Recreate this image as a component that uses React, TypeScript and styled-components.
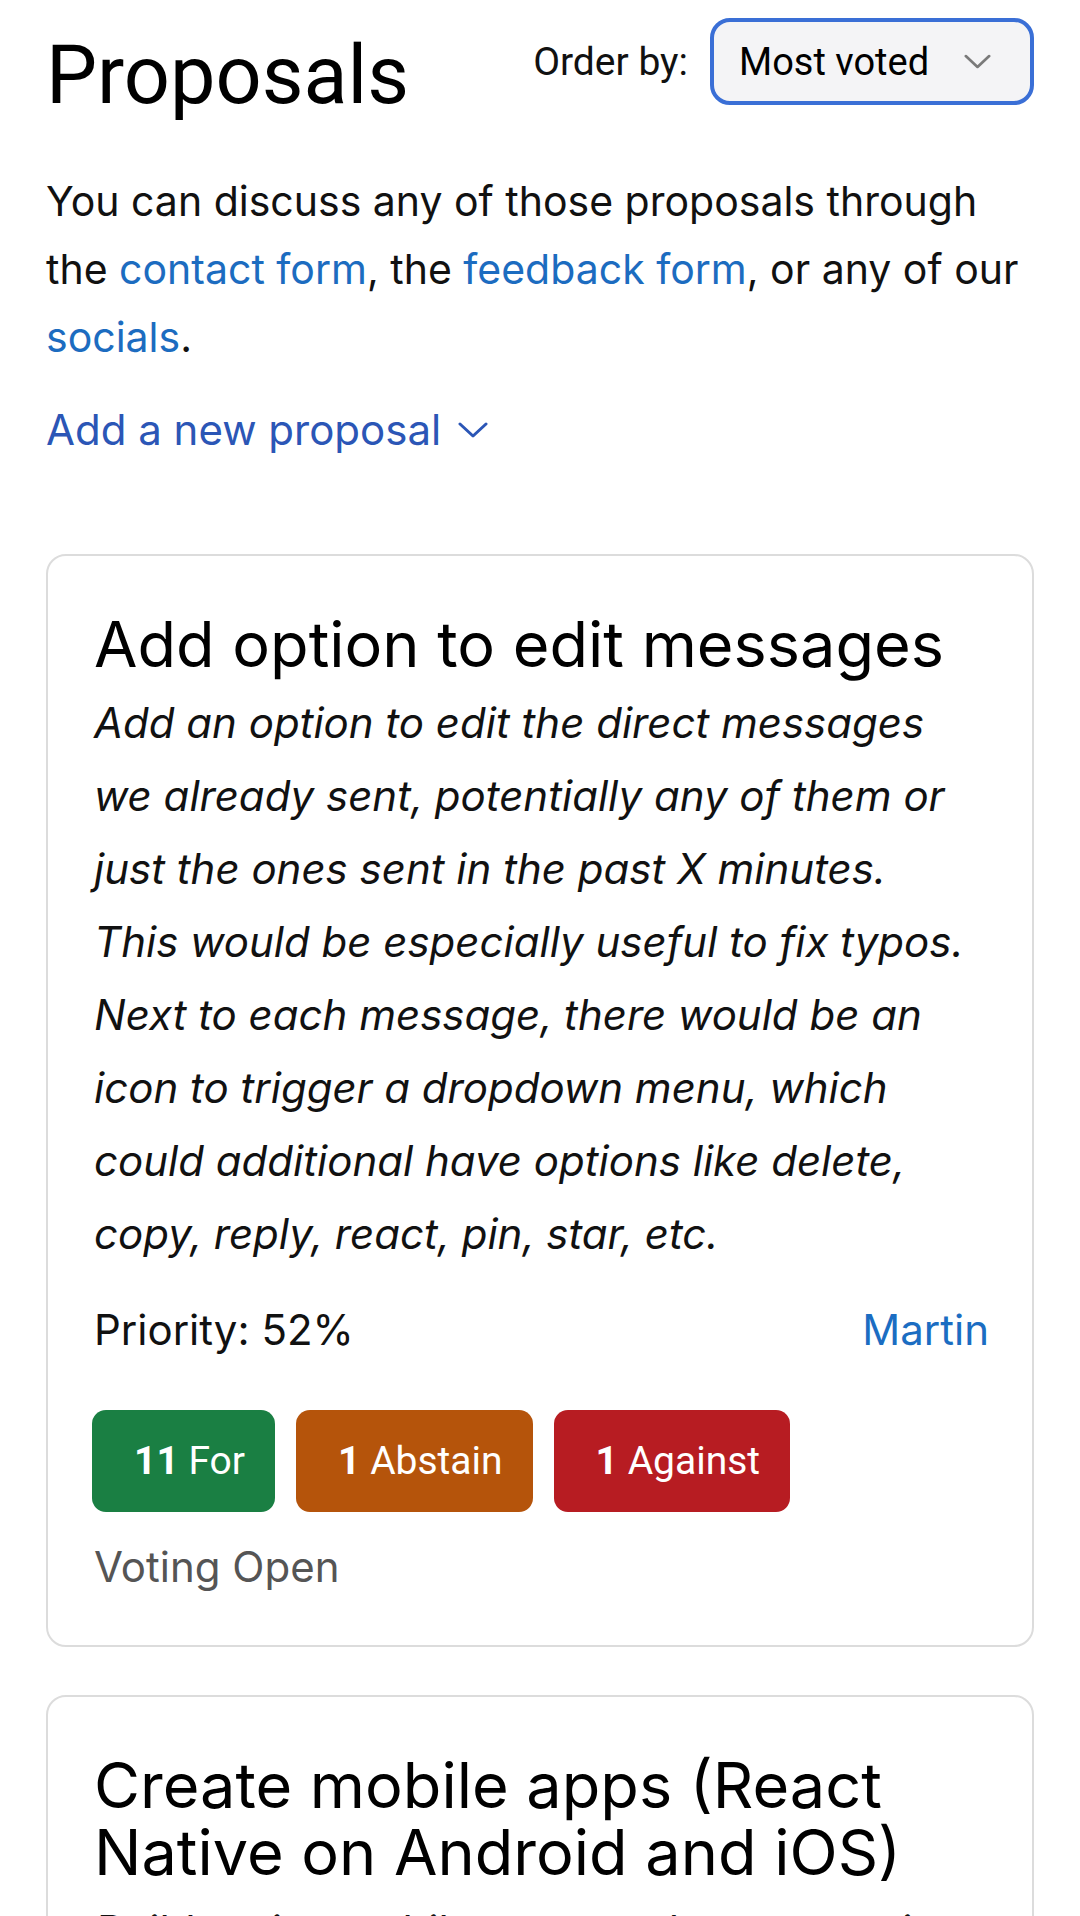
import { FC } from 'react'
import styled, { createGlobalStyle } from 'styled-components'

const GlobalStyle = createGlobalStyle`
    html, body {
        margin: 0;
        padding: 0;
        background: #ffffff;
    }
    body {
        font-family: Inter, Roboto, "Noto Sans", "Liberation Sans", sans-serif;
        color: #111111;
    }
    * {
        box-sizing: border-box;
    }
`;

const Page = styled.main`
    width: 1080px;
    padding: 18px 46px 0 46px;
`;

const Header = styled.header`
    display: flex;
    justify-content: space-between;
    align-items: flex-start;
`;

const Title = styled.h1`
    margin: 9px 0 0;
    font-family: Roboto, sans-serif;
    font-size: 81px;
    font-weight: 400;
    line-height: 97px;
    color: #000;
`;

const OrderBy = styled.label`
    display: flex;
    align-items: center;
    gap: 22px;
    font-family: Roboto, sans-serif;
    font-size: 39px;
    color: #111;
`;

const Select = styled.div`
    display: flex;
    align-items: center;
    justify-content: space-between;
    width: 324px;
    height: 87px;
    padding: 0 39px 0 25px;
    border: 4px solid #3a6fd6;
    border-radius: 20px;
    background: #f4f4f6;
    font-size: 38px;
    color: #000;
`;

const Intro = styled.p`
    margin: 43px 0 0;
    font-size: 41px;
    line-height: 68px;
`;

const Link = styled.a`
    color: #1c6cc0;
    text-decoration: none;
`;

const AddToggle = styled.button`
    display: flex;
    align-items: center;
    gap: 17px;
    margin: 25px 0 0;
    padding: 0;
    border: 0;
    background: transparent;
    font-family: inherit;
    font-size: 42px;
    line-height: 68px;
    color: #2b56b6;
`;

const List = styled.section`
    display: flex;
    flex-direction: column;
    gap: 48px;
    margin-top: 90px;
`;

const Card = styled.article`
    padding: 55px 43px 44px 46px;
    border: 2px solid #dcdcdc;
    border-radius: 20px;
    background: #fff;
`;

const CardTitle = styled.h2`
    margin: 0;
    font-size: 63px;
    font-weight: 400;
    line-height: 67px;
    color: #000;
`;

const Description = styled.p`
    max-width: 876px;
    margin: 8px 0 0;
    font-size: 42px;
    font-style: italic;
    line-height: 73px;
    color: #111;
`;

const MetaRow = styled.div`
    display: flex;
    justify-content: space-between;
    margin-top: 26px;
    font-size: 42px;
    line-height: 68px;
`;

const Author = styled.a`
    color: #1b6dc2;
    text-decoration: none;
`;

const Votes = styled.div`
    display: flex;
    gap: 21px;
    margin-top: 46px;
    margin-left: -2px;
`;

const VoteButton = styled.button<{ $color: string }>`
    height: 102px;
    padding: 0 30px 0 42px;
    border: 0;
    border-radius: 14px;
    background: ${p => p.$color};
    font-family: Roboto, sans-serif;
    font-size: 39px;
    color: #fff;

    strong {
        font-weight: 700;
    }
`;

const Status = styled.div`
    margin-top: 21px;
    font-size: 42px;
    line-height: 68px;
    color: #555;
`;

const Chevron: FC<{ color: string; width: number; height: number }> = ({ color, width, height }) => (
    <svg width={width} height={height} viewBox="0 0 30 16" fill="none">
        <path d="M2 2 L15 14 L28 2" stroke={color} strokeWidth="3" strokeLinecap="round" strokeLinejoin="round" />
    </svg>
);

type Proposal = {
    title: string;
    description: string;
    priority: number;
    author: string;
    votes: { for: number; abstain: number; against: number };
};

const proposals: Proposal[] = [
    {
        title: 'Add option to edit messages',
        description:
            'Add an option to edit the direct messages we already sent, potentially any of them or just the ones sent in the past X minutes. This would be especially useful to fix typos. Next to each message, there would be an icon to trigger a dropdown menu, which could additional have options like delete, copy, reply, react, pin, star, etc.',
        priority: 52,
        author: 'Martin',
        votes: { for: 11, abstain: 1, against: 1 },
    },
    {
        title: 'Create mobile apps (React Native on Android and iOS)',
        description:
            'Build native mobile apps so the community can be used comfortably from phones, with push notifications for new messages and events.',
        priority: 48,
        author: 'Martin',
        votes: { for: 9, abstain: 2, against: 1 },
    },
];

const App: FC = () => {
    return (
        <Page>
            <GlobalStyle />
            <Header>
                <Title>Proposals</Title>
                <OrderBy>
                    Order by:
                    <Select>
                        Most voted
                        <Chevron color="#7a7a7a" width={27} height={15} />
                    </Select>
                </OrderBy>
            </Header>

            <Intro>
                You can discuss any of those proposals through the <Link href="#">contact form</Link>, the{' '}
                <Link href="#">feedback form</Link>, or any of our <Link href="#">socials</Link>.
            </Intro>

            <AddToggle>
                Add a new proposal
                <Chevron color="#2b56b6" width={30} height={16} />
            </AddToggle>

            <List>
                {proposals.map(p => (
                    <Card key={p.title}>
                        <CardTitle>{p.title}</CardTitle>
                        <Description>{p.description}</Description>
                        <MetaRow>
                            <span>Priority: {p.priority}%</span>
                            <Author href="#">{p.author}</Author>
                        </MetaRow>
                        <Votes>
                            <VoteButton $color="#1a7f43">
                                <strong>{p.votes.for}</strong> For
                            </VoteButton>
                            <VoteButton $color="#b5540b">
                                <strong>{p.votes.abstain}</strong> Abstain
                            </VoteButton>
                            <VoteButton $color="#b71c22">
                                <strong>{p.votes.against}</strong> Against
                            </VoteButton>
                        </Votes>
                        <Status>Voting Open</Status>
                    </Card>
                ))}
            </List>
        </Page>
    );
}

export default App;
